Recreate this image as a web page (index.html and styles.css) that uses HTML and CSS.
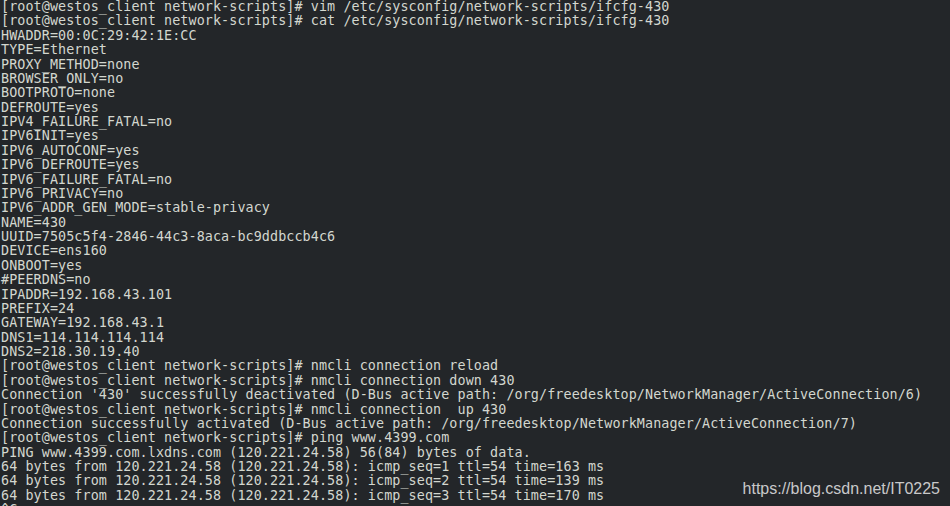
FILE: index.html
```html
<!DOCTYPE html>
<html>
<head>
<meta charset="utf-8">
<link rel="stylesheet" href="styles.css">
</head>
<body>
<div class="terminal">
<pre class="output">[root@westos_client network-scripts]# vim /etc/sysconfig/network-scripts/ifcfg-430
[root@westos_client network-scripts]# cat /etc/sysconfig/network-scripts/ifcfg-430
HWADDR=00:0C:29:42:1E:CC
TYPE=Ethernet
PROXY_METHOD=none
BROWSER_ONLY=no
BOOTPROTO=none
DEFROUTE=yes
IPV4_FAILURE_FATAL=no
IPV6INIT=yes
IPV6_AUTOCONF=yes
IPV6_DEFROUTE=yes
IPV6_FAILURE_FATAL=no
IPV6_PRIVACY=no
IPV6_ADDR_GEN_MODE=stable-privacy
NAME=430
UUID=7505c5f4-2846-44c3-8aca-bc9ddbccb4c6
DEVICE=ens160
ONBOOT=yes
#PEERDNS=no
IPADDR=192.168.43.101
PREFIX=24
GATEWAY=192.168.43.1
DNS1=114.114.114.114
DNS2=218.30.19.40
[root@westos_client network-scripts]# nmcli connection reload
[root@westos_client network-scripts]# nmcli connection down 430
Connection '430' successfully deactivated (D-Bus active path: /org/freedesktop/NetworkManager/ActiveConnection/6)
[root@westos_client network-scripts]# nmcli connection  up 430
Connection successfully activated (D-Bus active path: /org/freedesktop/NetworkManager/ActiveConnection/7)
[root@westos_client network-scripts]# ping www.4399.com
PING www.4399.com.lxdns.com (120.221.24.58) 56(84) bytes of data.
64 bytes from 120.221.24.58 (120.221.24.58): icmp_seq=1 ttl=54 time=163 ms
64 bytes from 120.221.24.58 (120.221.24.58): icmp_seq=2 ttl=54 time=139 ms
64 bytes from 120.221.24.58 (120.221.24.58): icmp_seq=3 ttl=54 time=170 ms
^C</pre>
<div class="watermark">https://blog.csdn.net/IT0225</div>
</div>
</body>
</html>
```
FILE: styles.css
```css
html, body {
  margin: 0;
  padding: 0;
  background: #232629;
  overflow: hidden;
}
.terminal {
  position: relative;
  width: 950px;
  height: 506px;
  overflow: hidden;
  background: #232629;
}
.output {
  margin: 0 0 0 1px;
  font-family: "DejaVu Sans Mono", monospace;
  font-size: 13.4px;
  letter-spacing: 0.09px;
  line-height: 14.38px;
  color: #d3d7cf;
  white-space: pre;
}
.watermark {
  position: absolute;
  right: 10px;
  bottom: 8px;
  font-family: "Liberation Sans", Arial, sans-serif;
  font-size: 16px;
  color: #c9c9c9;
}
```
